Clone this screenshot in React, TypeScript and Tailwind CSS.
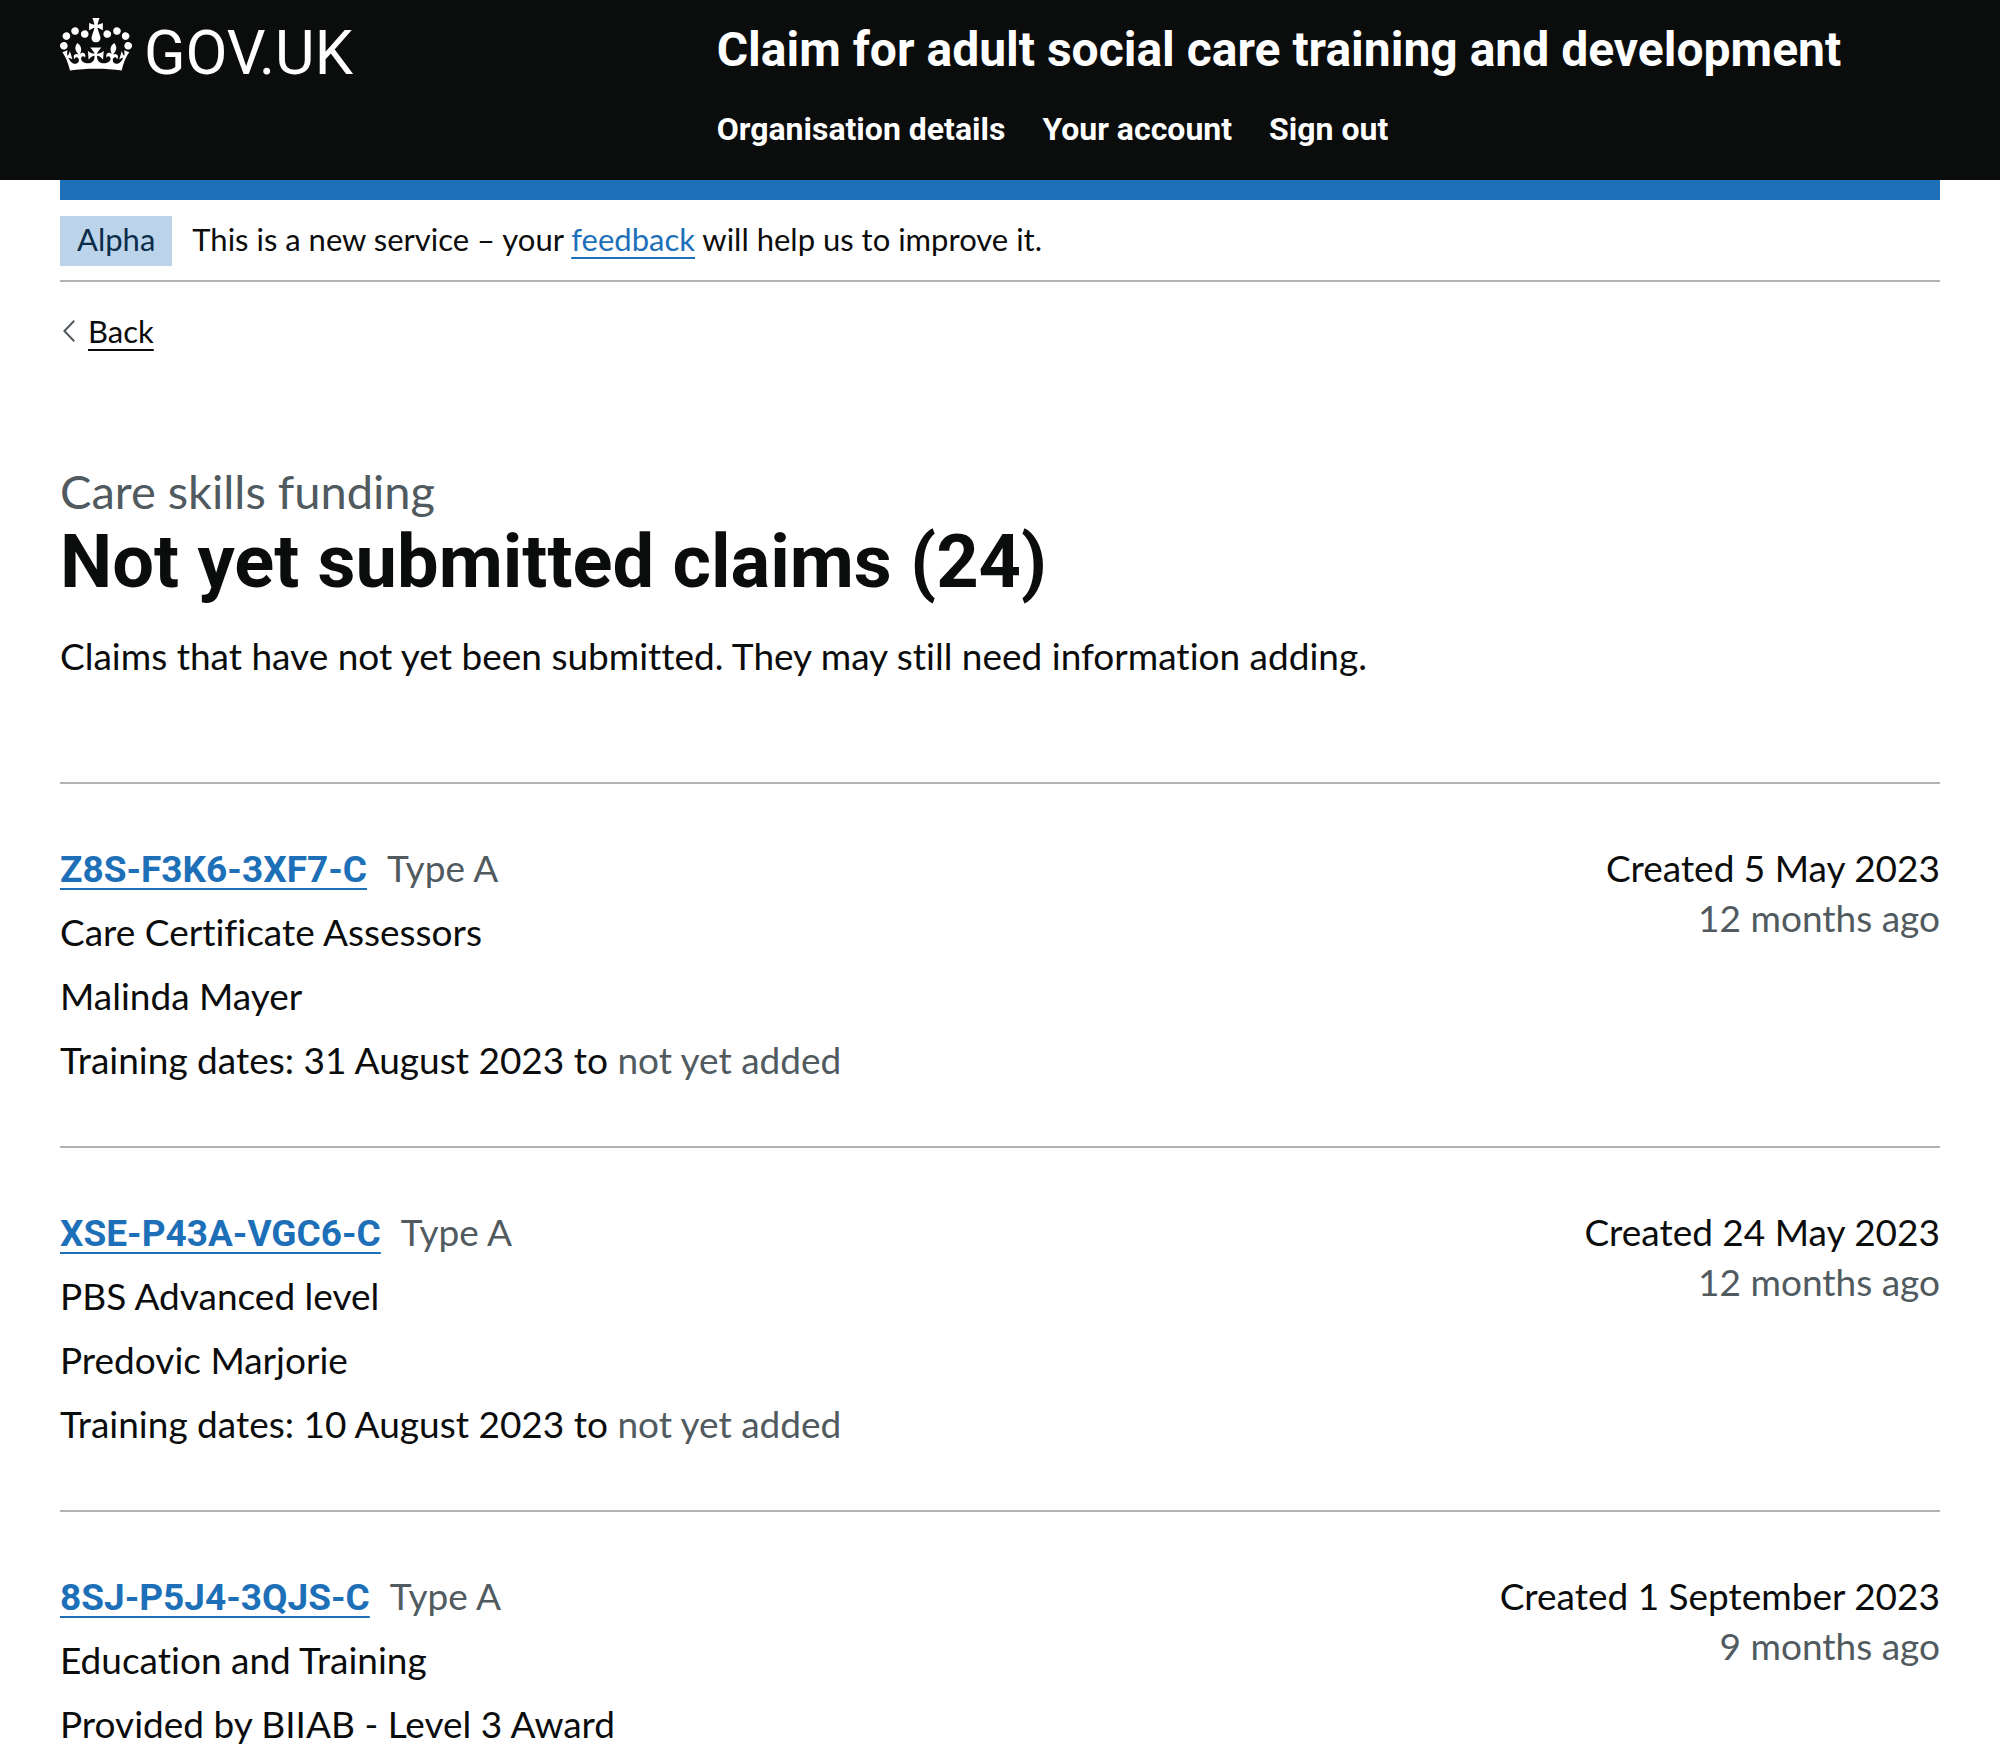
type Claim = {
  reference: string;
  type: string;
  created: string;
  age: string;
  lines: string[];
  startDate?: string;
};

const claims: Claim[] = [
  {
    reference: 'Z8S-F3K6-3XF7-C',
    type: 'Type A',
    created: 'Created 5 May 2023',
    age: '12 months ago',
    lines: ['Care Certificate Assessors', 'Malinda Mayer'],
    startDate: '31 August 2023',
  },
  {
    reference: 'XSE-P43A-VGC6-C',
    type: 'Type A',
    created: 'Created 24 May 2023',
    age: '12 months ago',
    lines: ['PBS Advanced level', 'Predovic Marjorie'],
    startDate: '10 August 2023',
  },
  {
    reference: '8SJ-P5J4-3QJS-C',
    type: 'Type A',
    created: 'Created 1 September 2023',
    age: '9 months ago',
    lines: ['Education and Training', 'Provided by BIIAB - Level 3 Award'],
  },
];

const navigation = ['Organisation details', 'Your account', 'Sign out'];

function Crown() {
  return (
    <svg viewBox="0 0 132 97" className="h-[53px] w-[72px] shrink-0" fill="currentColor" aria-hidden="true">
      <path d="M25 30.2c3.5 1.5 7.7-.2 9.1-3.7 1.5-3.6-.2-7.8-3.9-9.2-3.6-1.4-7.6.3-9.1 3.9-1.4 3.5.3 7.5 3.9 9zM9 39.5c3.6 1.5 7.8-.2 9.2-3.7 1.5-3.6-.2-7.8-3.9-9.1-3.6-1.5-7.6.2-9.1 3.8-1.4 3.5.3 7.5 3.8 9zM4.4 57.2c3.5 1.5 7.7-.2 9.1-3.8 1.5-3.6-.2-7.7-3.9-9.1-3.5-1.5-7.6.3-9.1 3.8-1.4 3.5.3 7.6 3.9 9.1zm38.3-21.4c3.5 1.5 7.7-.2 9.1-3.8 1.5-3.6-.2-7.7-3.9-9.1-3.6-1.5-7.6.3-9.1 3.8-1.3 3.6.4 7.7 3.9 9.1zm64.4-5.6c-3.6 1.5-7.8-.2-9.1-3.7-1.5-3.6.2-7.8 3.8-9.2 3.6-1.4 7.7.3 9.2 3.9 1.3 3.5-.4 7.5-3.9 9zm15.9 9.3c-3.6 1.5-7.7-.2-9.1-3.7-1.5-3.6.2-7.8 3.7-9.1 3.6-1.5 7.7.2 9.2 3.8 1.5 3.5-.3 7.5-3.8 9zm4.7 17.7c-3.6 1.5-7.8-.2-9.2-3.8-1.5-3.6.2-7.7 3.9-9.1 3.6-1.5 7.7.3 9.2 3.8 1.3 3.5-.4 7.6-3.9 9.1zM89.3 35.8c-3.6 1.5-7.8-.2-9.2-3.8-1.4-3.6.2-7.7 3.9-9.1 3.6-1.5 7.7.3 9.2 3.8 1.4 3.6-.3 7.7-3.9 9.1zM69.7 17.7l8.9 4.7V9.3l-8.9 2.8c-.2-.3-.5-.6-.9-.9L72.4 0H59.6l3.5 11.2c-.3.3-.6.5-.9.9l-8.8-2.8v13.1l8.8-4.7c.3.3.6.7.9.9l-5 15.4v.1c-.2.8-.4 1.6-.4 2.4 0 4.1 3.1 7.5 7 8.1h.2c.3 0 .7.1 1 .1.4 0 .7 0 1-.1h.2c4-.6 7.1-4.1 7.1-8.1 0-.8-.1-1.7-.4-2.4V34l-5.1-15.4c.4-.2.7-.6 1-.9zM66 92.8c16.9 0 32.8 1.1 47.1 3.2 4-16.9 8.9-26.7 14-33.5l-9.6-3.4c1 4.9 1.1 7.2 0 10.2-1.5-1.4-3-4.3-4.2-8.7L108.6 76c2.8-2 5-3.2 7.5-3.3-4.4 9.4-10 11.9-13.6 11.2-4.3-.8-6.3-4.6-5.6-7.9 1-4.7 5.7-5.9 8-.5 4.3-8.7-3-11.4-7.6-8.8 7.1-7.2 7.9-13.5 2.1-21.1-8 6.1-8.1 12.3-4.5 20.8-4.7-5.4-12.1-2.5-9.5 6.2 3.4-5.2 7.9-2 7.2 3.1-.6 4.3-6.4 7.8-13.5 7.2-10.3-.9-10.9-8-11.2-13.8 2.5-.5 7.1 1.8 11 7.3L80.2 60c-4.1 4.4-8 5.3-12.3 5.4 1.4-4.4 8-11.6 8-11.6H55.5s6.4 7.2 7.9 11.6c-4.2-.1-8-1-12.3-5.4l1.4 16.4c3.9-5.5 8.5-7.7 10.9-7.3-.3 5.8-.9 12.8-11.1 13.8-7.2.6-12.9-2.9-13.5-7.2-.7-5 3.8-8.3 7.1-3.1 2.7-8.7-4.6-11.6-9.4-6.2 3.7-8.5 3.6-14.7-4.6-20.8-5.8 7.6-5 13.9 2.2 21.1-4.7-2.6-11.9.1-7.7 8.8 2.3-5.5 7.1-4.2 8.1.5.7 3.3-1.3 7.1-5.7 7.9-3.5.7-9-1.8-13.5-11.2 2.5.1 4.7 1.3 7.5 3.3l-4.7-15.4c-1.2 4.4-2.7 7.2-4.3 8.7-1.1-3-.9-5.3 0-10.2l-9.5 3.4c5 6.9 9.9 16.7 14 33.5 14.8-2.1 30.8-3.2 47.7-3.2z" />
    </svg>
  );
}

function Header() {
  return (
    <header className="bg-[#0b0c0c] px-[60px] text-white">
      <div className="flex items-start pb-[22px]">
        <a href="#" aria-label="GOV.UK" className="flex w-1/3 items-start gap-3 pt-[18px]">
          <Crown />
          <span className="font-['Roboto',sans-serif] text-[61px] leading-[70px]">GOV.UK</span>
        </a>
        <div className="flex w-2/3 flex-col gap-5 pt-5 pl-[30px] font-['Roboto',sans-serif] font-bold">
          <a href="#" className="text-[48px] leading-[60px]">
            Claim for adult social care training and development
          </a>
          <nav aria-label="Menu">
            <ul className="flex gap-[37px] text-[32px] leading-[58px]">
              {navigation.map((item) => (
                <li key={item}>
                  <a href="#">{item}</a>
                </li>
              ))}
            </ul>
          </nav>
        </div>
      </div>
    </header>
  );
}

function PhaseBanner() {
  return (
    <div className="flex items-center gap-5 border-b-2 border-[#b1b4b6] pt-4 pb-[14px] text-[31px] leading-[46px]">
      <strong className="bg-[#bbd4ea] px-[17px] pb-1 font-normal text-[#0c2d4a]">Alpha</strong>
      <span className="pb-1">
        This is a new service – your{' '}
        <a href="#" className="text-[#1d70b8] underline decoration-2 underline-offset-[6px]">
          feedback
        </a>{' '}
        will help us to improve it.
      </span>
    </div>
  );
}

function ClaimRow({ claim }: { claim: Claim }) {
  return (
    <li className="flex justify-between border-t-2 border-[#b1b4b6] pt-[59px] pb-[61px]">
      <div className="flex flex-col gap-[14px]">
        <h2 className="flex h-[50px] items-baseline gap-5">
          <a
            href="#"
            className="font-['Roboto',sans-serif] font-bold text-[#1d70b8] underline decoration-2 underline-offset-[6px] [text-decoration-skip-ink:none]"
          >
            {claim.reference}
          </a>
          <span className="text-[#505a5f]">{claim.type}</span>
        </h2>
        {claim.lines.map((line) => (
          <p key={line}>{line}</p>
        ))}
        {claim.startDate && (
          <p>
            Training dates: {claim.startDate} to <span className="text-[#505a5f]">not yet added</span>
          </p>
        )}
      </div>
      <div className="text-right">
        <p>{claim.created}</p>
        <p className="text-[#505a5f]">{claim.age}</p>
      </div>
    </li>
  );
}

export default function App() {
  return (
    <div className="min-h-screen bg-white font-['Lato',sans-serif] text-[#0b0c0c] [font-variant-ligatures:none]">
      <Header />
      <div className="mx-[60px] border-t-[20px] border-[#1d70b8]">
        <PhaseBanner />
        <a href="#" className="mt-[30px] inline-flex items-center gap-[13px] pl-[3px] text-[31px] leading-[38px]">
          <svg viewBox="0 0 12 22" className="h-[22px] w-3" fill="none" stroke="#505a5f" strokeWidth="2" aria-hidden="true">
            <path d="M11.2 .7 1.4 11l9.8 10.3" />
          </svg>
          <span className="underline decoration-2 underline-offset-[6px]">Back</span>
        </a>
        <main className="pt-[112px] text-[37px] leading-[50px]">
          <span className="block text-[47px] leading-[58px] text-[#505a5f]">Care skills funding</span>
          <h1 className="font-['Roboto',sans-serif] text-[74px] leading-[84px] font-bold">
            Not yet submitted claims (24)
          </h1>
          <p className="mt-[27px] mb-[101px]">
            Claims that have not yet been submitted. They may still need information adding.
          </p>
          <ul>
            {claims.map((claim) => (
              <ClaimRow key={claim.reference} claim={claim} />
            ))}
          </ul>
        </main>
      </div>
    </div>
  );
}
